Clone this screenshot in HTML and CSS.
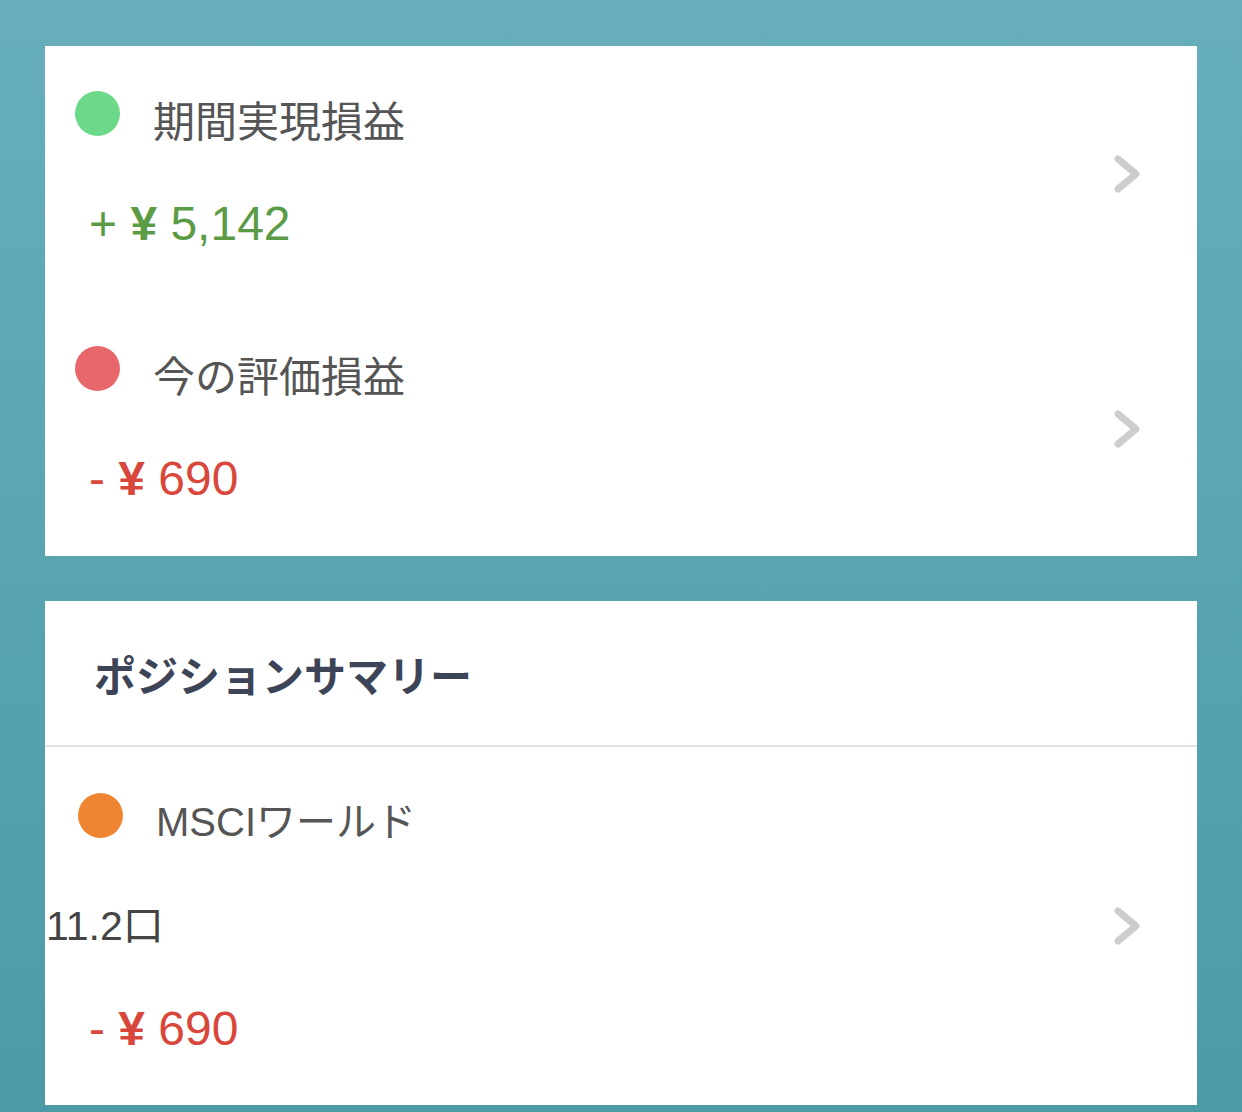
FILE: index.html
```html
<!DOCTYPE html>
<html lang="ja">
<head>
<meta charset="utf-8">
<link rel="stylesheet" href="styles.css">
</head>
<body>
<div class="page">
  <section class="card">
    <div class="row row-pl">
      <div class="row-main">
        <div class="label"><span class="dot dot-green"></span><span class="label-text">期間実現損益</span></div>
        <div class="amount amount-plus">+ <span class="yen">¥</span> 5,142</div>
      </div>
      <svg class="chev" viewBox="0 0 30 40" width="30" height="40"><polyline points="6,5 24,20 6,35" /></svg>
    </div>
    <div class="row row-pl">
      <div class="row-main">
        <div class="label"><span class="dot dot-red"></span><span class="label-text">今の評価損益</span></div>
        <div class="amount amount-minus">- <span class="yen">¥</span> 690</div>
      </div>
      <svg class="chev" viewBox="0 0 30 40" width="30" height="40"><polyline points="6,5 24,20 6,35" /></svg>
    </div>
  </section>

  <section class="card">
    <header class="card-head">ポジションサマリー</header>
    <div class="row row-pos">
      <div class="row-main">
        <div class="label label-pos"><span class="dot dot-orange"></span><span class="label-text">MSCIワールド</span></div>
        <div class="qty">11.2口</div>
        <div class="amount amount-minus">- <span class="yen">¥</span> 690</div>
      </div>
      <svg class="chev" viewBox="0 0 30 40" width="30" height="40"><polyline points="6,5 24,20 6,35" /></svg>
    </div>
  </section>
</div>
</body>
</html>
```

FILE: styles.css
```css
html, body {
  margin: 0;
  padding: 0;
}
body {
  background: linear-gradient(180deg, #67aeba 0%, #58a5b1 50%, #4b9ba7 100%);
  font-family: "Liberation Sans", "Noto Sans CJK JP", sans-serif;
  min-height: 1112px;
}
.page {
  padding: 46px 45px 7px;
  display: flex;
  flex-direction: column;
  gap: 45px;
}
.card {
  background: #ffffff;
  display: flex;
  flex-direction: column;
}
.row {
  display: flex;
  align-items: center;
}
.row-main {
  flex: 1;
  display: flex;
  flex-direction: column;
}
.row-pl .row-main {
  padding: 52px 0 48px;
  gap: 47px;
}
.row-pos .row-main {
  padding: 50px 0 47px;
}
.label {
  display: flex;
  align-items: center;
  gap: 33px;
  padding-left: 30px;
  height: 50px;
  color: #555555;
  font-size: 42px;
}
.label-pos {
  padding-left: 33px;
  font-size: 40px;
}
.label-text {
  line-height: 50px;
}
.dot {
  width: 45px;
  height: 45px;
  border-radius: 50%;
  flex: none;
  margin-bottom: 20px;
}
.label-pos .dot {
  margin-bottom: 14px;
}
.dot-green { background: #6cd98a; }
.dot-red { background: #e8676b; }
.dot-orange { background: #ef8533; }
.amount {
  font-size: 48px;
  line-height: 58px;
  height: 58px;
  padding-left: 44px;
  white-space: pre;
}
.yen {
  font-weight: bold;
}
.amount-plus { color: #5b9b46; }
.amount-minus { color: #d9473c; }
.qty {
  font-size: 41px;
  line-height: 50px;
  height: 50px;
  color: #444444;
  padding-left: 1px;
  margin: 54px 0 49px;
}
.chev {
  flex: none;
  margin-right: 55px;
}
.chev polyline {
  fill: none;
  stroke: #cdcdcd;
  stroke-width: 7;
  stroke-linecap: round;
  stroke-linejoin: round;
}
.card-head {
  height: 144px;
  display: flex;
  align-items: center;
  padding-left: 49px;
  border-bottom: 2px solid #e2e2e2;
  font-family: "Noto Sans CJK JP", sans-serif;
  font-weight: bold;
  font-size: 42px;
  color: #3d4457;
}
```
